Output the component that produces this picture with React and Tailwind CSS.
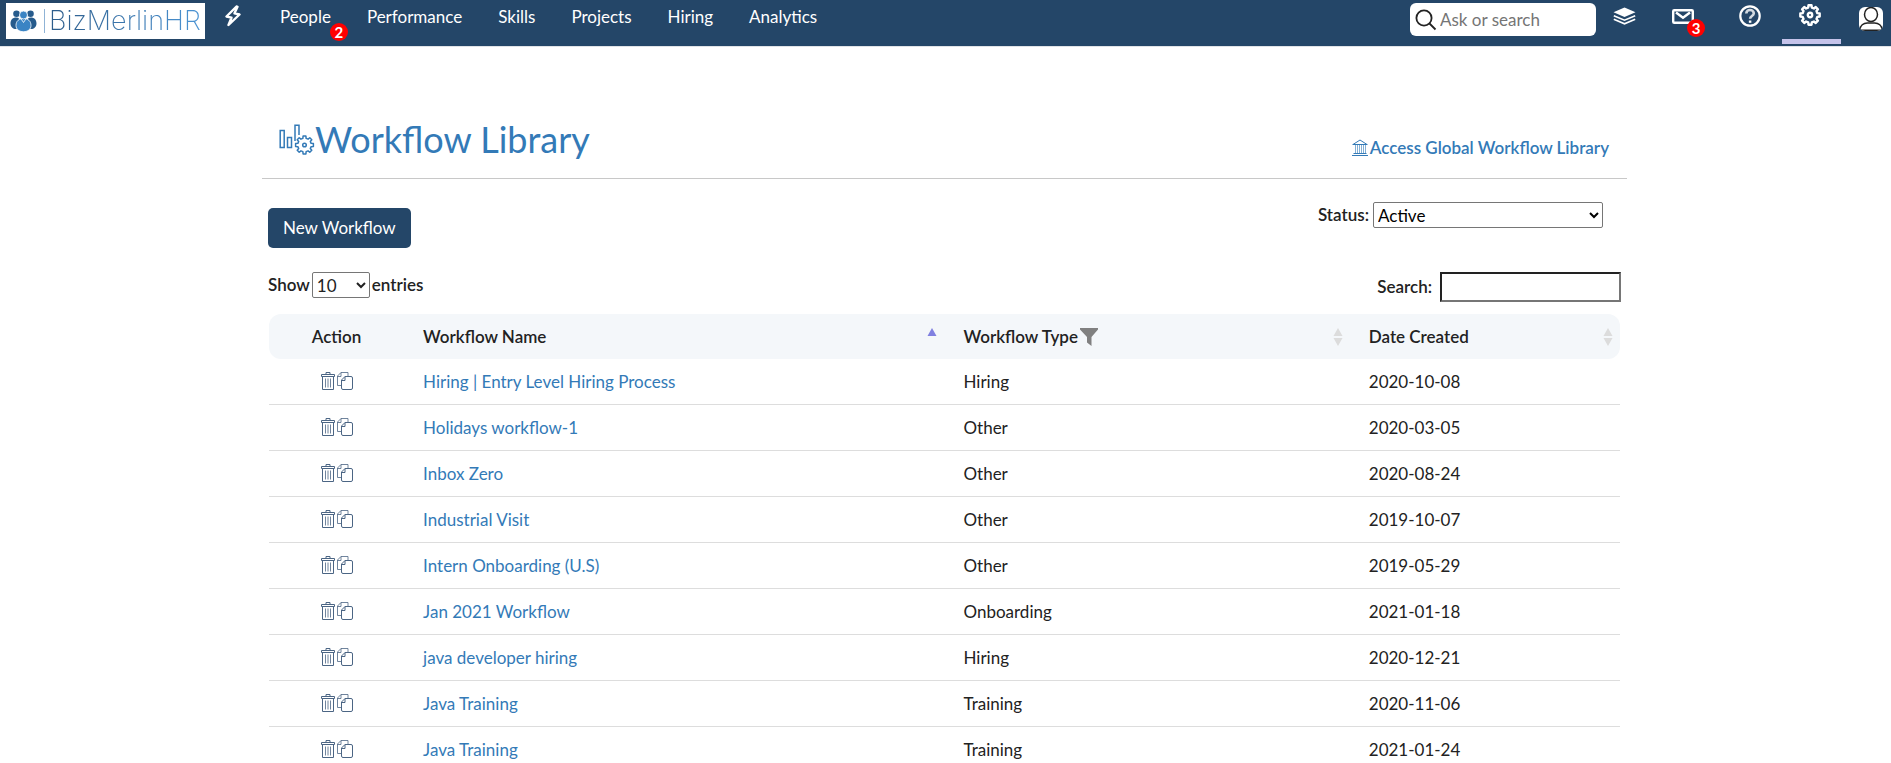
import React from 'react';

const ROWS = [
  ['Hiring | Entry Level Hiring Process', 'Hiring', '2020-10-08'],
  ['Holidays workflow-1', 'Other', '2020-03-05'],
  ['Inbox Zero', 'Other', '2020-08-24'],
  ['Industrial Visit', 'Other', '2019-10-07'],
  ['Intern Onboarding (U.S)', 'Other', '2019-05-29'],
  ['Jan 2021 Workflow', 'Onboarding', '2021-01-18'],
  ['java developer hiring', 'Hiring', '2020-12-21'],
  ['Java Training', 'Training', '2020-11-06'],
  ['Java Training', 'Training', '2021-01-24'],
];

function gearPath(cx, cy, outer, inner, teeth) {
  const step = (Math.PI * 2) / teeth;
  const points = [];
  for (let i = 0; i < teeth; i += 1) {
    const a = i * step - Math.PI / 2;
    [[-0.31, inner], [-0.2, outer], [0.2, outer], [0.31, inner]].forEach(([f, r]) => {
      points.push(`${(cx + r * Math.cos(a + f * step)).toFixed(2)} ${(cy + r * Math.sin(a + f * step)).toFixed(2)}`);
    });
  }
  return `M${points.join('L')}Z`;
}

function PeopleLogo() {
  return (
    <svg className="h-[22px] w-[27px] shrink-0" viewBox="0 0 27 22" aria-hidden="true">
      <g fill="#265b8c">
        <circle cx="6.5" cy="3.8" r="3.3" />
        <circle cx="20.5" cy="3.8" r="3.3" />
        <path d="M0.5 13.5C0.5 9.500 3 7.500 6 7.500s4.500 2 4.500 5.500-1.500 6-4.500 6-5.500-2-5.500-5.500zM26.500 13.500c0-4-2.500-6-5.500-6s-4.500 2-4.500 5.500 1.500 6 4.500 6 5.500-2 5.500-5.500z" />
      </g>
      <g fill="#3a84c4" stroke="#fff" strokeWidth="0.8">
        <path d="M6 15.500c0-4.500 3-7 7.500-7s7.500 2.500 7.500 7c0 4-3.500 6.200-7.500 6.200S6 19.500 6 15.500z" />
        <circle cx="13.500" cy="5" r="4" />
      </g>
      <path d="M11 8.800l2.500 3.700L16 8.800" fill="none" stroke="#fff" strokeWidth="0.8" />
    </svg>
  );
}

function BoltIcon() {
  return (
    <svg className="h-[22px] w-4" viewBox="0 0 16 22" fill="none" stroke="#fff" strokeWidth="2.400" strokeLinejoin="round" aria-hidden="true">
      <path d="M11.500 1.500L1.500 11.500l5 1.200L3.500 20 14.500 9.500l-5-1.200 3-6.500z" />
    </svg>
  );
}

function LayersIcon() {
  return (
    <svg className="h-[18px] w-[23px]" viewBox="0 0 23 18" aria-hidden="true">
      <path d="M11.500 0.500L22.500 5.200 11.500 10 0.500 5.200z" fill="#fff" />
      <path d="M0.800 8.700l10.700 4.500 10.700-4.500M0.800 12.200l10.700 4.600 10.700-4.600" fill="none" stroke="#fff" strokeWidth="1.600" />
    </svg>
  );
}

function MailIcon() {
  return (
    <svg className="h-[15px] w-[22px]" viewBox="0 0 22 15" fill="none" stroke="#fff" strokeWidth="2.400" aria-hidden="true">
      <rect x="1.200" y="1.200" width="19.600" height="12.600" rx="1" />
      <path d="M4 3.500L11 8.800l7-5.300" />
    </svg>
  );
}

function HelpIcon() {
  return (
    <svg className="size-[22px]" viewBox="0 0 22 22" fill="none" stroke="#fff" aria-hidden="true">
      <circle cx="11" cy="11" r="9.700" strokeWidth="2.200" />
      <path d="M7.300 8.500C7.300 6.300 8.900 5 11 5s3.800 1.300 3.800 3.300c0 2.800-3.700 2.700-3.700 5.500" strokeWidth="2.600" opacity="0.800" />
      <path d="M11.100 15.500v2.300" strokeWidth="2.500" />
    </svg>
  );
}

function GearIcon() {
  return (
    <svg className="size-[22px]" viewBox="0 0 22 22" fill="none" stroke="#fff" strokeWidth="2.400" strokeLinejoin="round" aria-hidden="true">
      <path d={gearPath(11, 11, 9.8, 7.6, 8)} />
      <circle cx="11" cy="11" r="2.200" />
    </svg>
  );
}

function UserIcon() {
  return (
    <svg className="size-6 rounded-md bg-white" viewBox="0 0 24 24" fill="none" stroke="#222" strokeWidth="1.500" aria-hidden="true">
      <ellipse cx="12" cy="7.500" rx="6.500" ry="7" />
      <path d="M0.800 23.200c0-5 4-7.200 7.500-7.200h7.400c3.500 0 7.500 2.200 7.500 7.200z" />
    </svg>
  );
}

function SearchIcon() {
  return (
    <svg className="size-[22px] shrink-0" viewBox="0 0 22 22" fill="none" stroke="#222" strokeWidth="1.800" aria-hidden="true">
      <circle cx="9" cy="9" r="7.600" />
      <path d="M14.500 14.500l6 6" />
    </svg>
  );
}

function WorkflowIcon() {
  return (
    <svg className="h-[31px] w-9" viewBox="0 0 36 31" fill="none" stroke="#337ab7" strokeWidth="1.500" aria-hidden="true">
      <rect x="1.200" y="6.500" width="4" height="17" />
      <rect x="8.500" y="13.500" width="4" height="10" />
      <path d="M16 17V1.200h4V11" />
      <path d={gearPath(25.5, 21, 9, 6.8, 8)} strokeLinejoin="round" />
      <circle cx="25.500" cy="21" r="1.800" />
    </svg>
  );
}

function LibraryIcon() {
  return (
    <svg className="h-[18px] w-4" viewBox="0 0 16 18" fill="none" stroke="#337ab7" aria-hidden="true">
      <path d="M1 5.500L8 1l7 4.500M0.500 5.500h15M1.500 14.500h13M0 16.500h16" />
      <path d="M3.500 6v8M5.500 6v8M7.500 6v8M9.500 6v8M11.500 6v8M13.500 6v8" strokeWidth="0.600" />
    </svg>
  );
}

function TrashIcon() {
  return (
    <svg className="h-[18px] w-[14px]" viewBox="0 0 14 18" fill="none" stroke="#4b6584" aria-hidden="true">
      <path d="M5 2.500V0.500h4v2M0.500 4.500v-2h13v2zM1.500 4.500v13h11v-13" />
      <path d="M4.500 6.500v9M7 6.500v9M9.500 6.500v9" strokeWidth="0.800" />
    </svg>
  );
}

function CopyIcon() {
  return (
    <svg className="h-[18px] w-4" viewBox="0 0 16 18" fill="none" stroke="#4b6584" aria-hidden="true">
      <path d="M4 13.500H0.500V4L4 0.500h7V4M0.500 4.500H4V0.500" strokeWidth="0.800" />
      <path d="M4.500 8L8 4.500h6q1.500 0 1.500 1.500v10q0 1.500-1.500 1.500H6q-1.500 0-1.500-1.500zM4.500 8.500H8v-4" />
    </svg>
  );
}

function FunnelIcon() {
  return (
    <svg className="h-[18px] w-[18px]" viewBox="0 0 18 18" fill="#808080" aria-hidden="true">
      <path d="M0 0h18v1.500L11.500 9v9L7 14.500V9L0 1.500z" />
    </svg>
  );
}

function SortIcon({ active = false }) {
  return (
    <svg className="h-[18px] w-[10px] shrink-0" viewBox="0 0 10 18" aria-hidden="true">
      <path d="M5 0l4.500 8h-9z" fill={active ? '#8080e0' : '#dcdcdc'} />
      {!active && <path d="M5 18l4.500-8h-9z" fill="#dcdcdc" />}
    </svg>
  );
}

function NavLink({ children, badge }) {
  return (
    <a href="#" className="relative">
      {children}
      {badge && (
        <span className="absolute top-[18px] -right-[17px] flex size-[18px] items-center justify-center rounded-full bg-[#ff0000] text-[15px] leading-none font-bold">
          {badge}
        </span>
      )}
    </a>
  );
}

function TopBar() {
  return (
    <header className="flex h-[47px] items-start border-b border-[#e0e3e7] bg-[#244668] pl-[6px] text-white">
      <a href="#" aria-label="BizMerlinHR home" className="mt-[3px] flex h-9 w-[199px] items-center bg-white pl-1">
        <PeopleLogo />
        <span className="mr-1 ml-[7px] h-6 w-px bg-[#8fb3d6]" />
        <span className="bg-linear-to-r from-[#2d5c8a] to-[#4b94d4] bg-clip-text font-['Inter'] text-[27px] leading-8 font-extralight text-transparent">
          BizMerlinHR
        </span>
      </a>
      <button type="button" aria-label="Quick actions" className="mt-[5px] ml-5">
        <BoltIcon />
      </button>
      <nav className="mt-[5px] ml-[39px] flex gap-9 text-[17px] leading-6">
        <NavLink badge="2">People</NavLink>
        <NavLink>Performance</NavLink>
        <NavLink>Skills</NavLink>
        <NavLink>Projects</NavLink>
        <NavLink>Hiring</NavLink>
        <NavLink>Analytics</NavLink>
      </nav>
      <div className="ml-auto flex items-start pr-2">
        <label className="mt-[3px] flex h-[33px] w-[186px] items-center gap-[3px] rounded-md bg-white pl-[5px]">
          <SearchIcon />
          <input type="text" aria-label="Ask or search" placeholder="Ask or search" className="w-full min-w-0 text-[17px] text-[#222] outline-none placeholder:text-[#757575]" />
        </label>
        <button type="button" aria-label="Layers" className="mt-[7px] ml-[17px]">
          <LayersIcon />
        </button>
        <button type="button" aria-label="Messages" className="relative mt-[9px] ml-9">
          <MailIcon />
          <span className="absolute top-[10px] left-[15px] flex size-[18px] items-center justify-center rounded-full bg-[#ff0000] text-[15px] leading-none font-bold">3</span>
        </button>
        <button type="button" aria-label="Help" className="mt-[5px] ml-[45px]">
          <HelpIcon />
        </button>
        <button type="button" aria-label="Settings" className="ml-[21px] flex h-11 w-[59px] justify-center border-b-[5px] border-[#c5c3ea] pt-1 pr-1">
          <GearIcon />
        </button>
        <button type="button" aria-label="Account" className="mt-[7px] ml-[18px]">
          <UserIcon />
        </button>
      </div>
    </header>
  );
}

function HeaderCell({ children, className = '', sort }) {
  return (
    <th scope="col" className={`h-[45px] bg-[#f4f7fa] py-0 pr-[7px] pl-[19px] text-left ${className}`}>
      <div className="flex items-center justify-between">
        <span className="flex items-center gap-[2px]">{children}</span>
        <SortIcon active={sort === 'asc'} />
      </div>
    </th>
  );
}

function WorkflowTable() {
  return (
    <table className="w-full table-fixed border-separate border-spacing-0 text-[17px] leading-6 text-[#222]">
      <thead className="font-semibold *:*:font-semibold">
        <tr>
          <th scope="col" className="w-[10%] rounded-l-xl bg-[#f4f7fa] text-center">Action</th>
          <HeaderCell className="w-[40%]" sort="asc">Workflow Name</HeaderCell>
          <HeaderCell className="w-[30%]">
            Workflow Type
            <FunnelIcon />
          </HeaderCell>
          <HeaderCell className="w-[20%] rounded-r-xl">Date Created</HeaderCell>
        </tr>
      </thead>
      <tbody>
        {ROWS.map(([name, type, date]) => (
          <tr key={name + date} className="h-[46px] *:border-b *:border-[#dddddd]">
            <td>
              <div className="flex justify-center gap-[2px] pb-[2px]">
                <button type="button" aria-label={`Delete ${name}`}><TrashIcon /></button>
                <button type="button" aria-label={`Copy ${name}`}><CopyIcon /></button>
              </div>
            </td>
            <td className="px-[19px]"><a href="#" className="text-[#337ab7]">{name}</a></td>
            <td className="px-[19px]">{type}</td>
            <td className="px-[19px]">{date}</td>
          </tr>
        ))}
      </tbody>
    </table>
  );
}

export default function App() {
  return (
    <div className="h-screen overflow-hidden bg-white font-['Lato',sans-serif] text-[17px] leading-6 text-[#222]">
      <TopBar />
      <main className="mx-auto max-w-[1367px] pr-[2px]">
        <div className="flex items-end justify-between border-b border-[#c8c8c8] pt-[67px] pr-[18px] pl-[17px]">
          <h1 className="flex items-center pb-[14px] text-4xl leading-[50px] text-[#337ab7]">
            <WorkflowIcon />
            Workflow Library
          </h1>
          <a href="#" className="flex items-center gap-[2px] pb-[18px] font-semibold text-[#337ab7]">
            <LibraryIcon />
            Access Global Workflow Library
          </a>
        </div>
        <div className="flex items-start justify-between pr-6 pl-[6px]">
          <button type="button" className="mt-[29px] h-10 rounded-[5px] bg-[#244668] px-[15px] text-white">New Workflow</button>
          <div className="mt-[23px] flex items-center gap-1">
            <label htmlFor="status" className="font-semibold">Status:</label>
            <select id="status" className="h-[26px] w-[230px] rounded-xs border border-[#767676] bg-white text-black">
              <option>Active</option>
              <option>Inactive</option>
            </select>
          </div>
        </div>
        <div className="mt-6 flex items-start justify-between px-[6px] font-semibold">
          <label className="flex items-center gap-[2px]">
            Show
            <select className="h-[26px] w-[58px] rounded-xs border border-[#767676] bg-white font-normal">
              <option>10</option>
              <option>25</option>
              <option>50</option>
            </select>
            entries
          </label>
          <label className="flex items-center gap-2">
            Search:
            <input type="search" className="h-[30px] w-[181px] border-2 border-t-[#222] border-r-[#767676] border-b-[#767676] border-l-[#222] px-1" />
          </label>
        </div>
        <div className="mt-3 pr-[7px] pl-[7px]">
          <WorkflowTable />
        </div>
      </main>
    </div>
  );
}
